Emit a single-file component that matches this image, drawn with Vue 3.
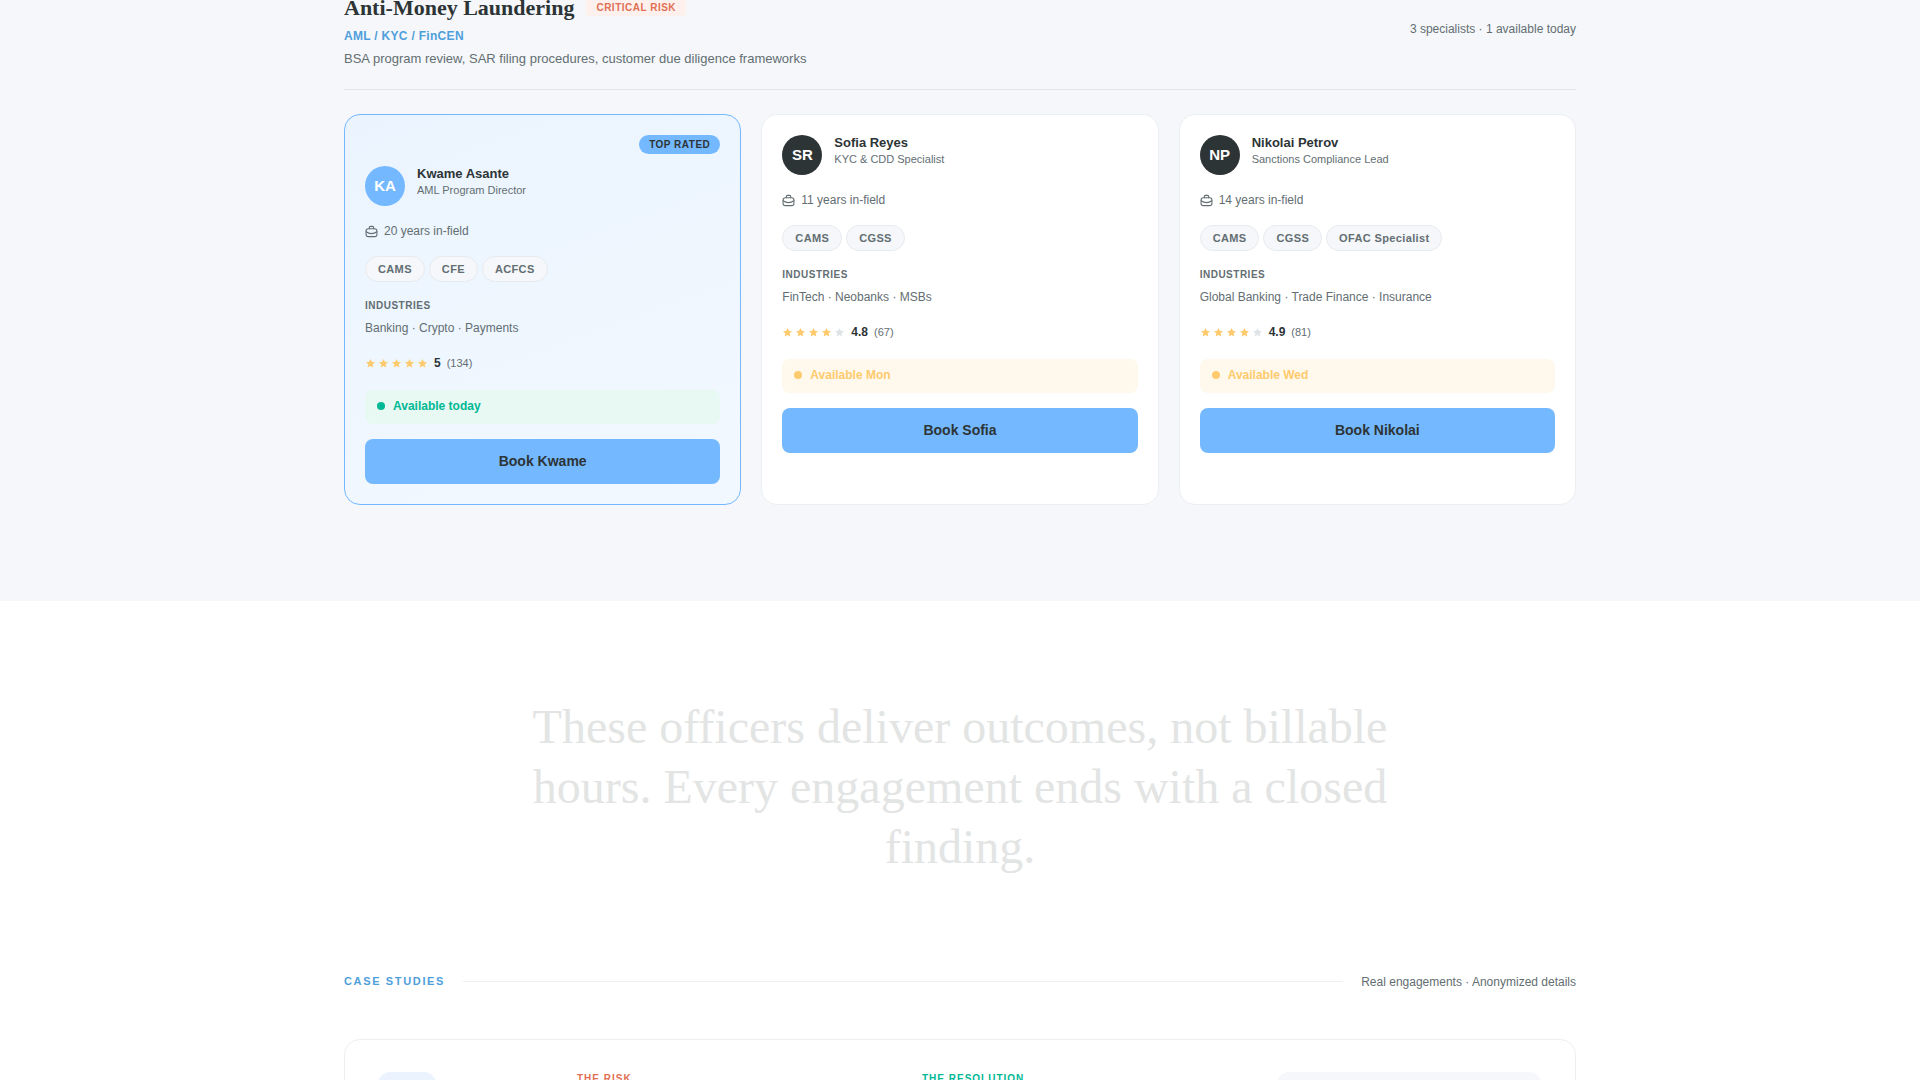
<template>
  <div class="page">
    <section class="upper">
      <div class="wrap">
        <header class="area-head">
          <div>
            <div class="title-row">
              <h2>Anti-Money Laundering</h2>
              <span class="risk">CRITICAL RISK</span>
            </div>
            <div class="codes">AML / KYC / FinCEN</div>
            <p class="desc">BSA program review, SAR filing procedures, customer due diligence frameworks</p>
          </div>
          <div class="count">3 specialists · 1 available today</div>
        </header>

        <div class="cards">
          <article v-for="o in officers" :key="o.name" class="card" :class="{ top: o.top }">
            <div v-if="o.top" class="top-row"><span class="top-badge">TOP RATED</span></div>
            <div class="person">
              <div class="avatar">{{ o.initials }}</div>
              <div>
                <div class="name">{{ o.name }}</div>
                <div class="role">{{ o.role }}</div>
              </div>
            </div>
            <div class="years">
              <svg width="13" height="13" viewBox="0 0 24 24" fill="none" stroke="currentColor" stroke-width="2" stroke-linecap="round" stroke-linejoin="round">
                <path d="M16 7V4.5a2 2 0 0 0-2-2h-4a2 2 0 0 0-2 2V7" />
                <rect x="2" y="7" width="20" height="14.5" rx="4" />
                <path d="M22 12.5a18 18 0 0 1-20 0" />
              </svg>
              {{ o.years }} years in-field
            </div>
            <div class="tags">
              <span v-for="t in o.certs" :key="t" class="tag">{{ t }}</span>
            </div>
            <div class="ind-label">INDUSTRIES</div>
            <div class="ind">{{ o.industries }}</div>
            <div class="rating">
              <span class="stars">
                <svg v-for="n in 5" :key="n" width="13" height="13" viewBox="0 0 24 24" :class="n <= o.filled ? 'on' : 'off'">
                  <path d="M12 3.5l2.5 5.4 5.9.7-4.4 4 1.2 5.8-5.2-3-5.2 3 1.2-5.8-4.4-4 5.9-.7z" />
                </svg>
              </span>
              <b>{{ o.score }}</b>
              <span class="reviews">({{ o.reviews }})</span>
            </div>
            <div class="avail" :class="o.today ? 'today' : 'later'">
              <i></i>{{ o.avail }}
            </div>
            <button class="book">Book {{ o.first }}</button>
          </article>
        </div>
      </div>
    </section>

    <section class="lower">
      <blockquote>These officers deliver outcomes, not billable hours. Every engagement ends with a closed finding.</blockquote>
      <div class="wrap">
        <div class="case-head">
          <span class="case-label">CASE STUDIES</span>
          <span class="case-line"></span>
          <span class="case-note">Real engagements · Anonymized details</span>
        </div>
        <div class="case-card">
          <div class="case-pill"></div>
          <div class="col risk-col">THE RISK</div>
          <div class="col res-col">THE RESOLUTION</div>
          <div class="case-panel"></div>
        </div>
      </div>
    </section>
  </div>
</template>

<script setup>
const officers = [
  { name: 'Kwame Asante', first: 'Kwame', initials: 'KA', role: 'AML Program Director', years: 20, certs: ['CAMS', 'CFE', 'ACFCS'], industries: 'Banking · Crypto · Payments', filled: 5, score: '5', reviews: 134, today: true, avail: 'Available today', top: true },
  { name: 'Sofia Reyes', first: 'Sofia', initials: 'SR', role: 'KYC & CDD Specialist', years: 11, certs: ['CAMS', 'CGSS'], industries: 'FinTech · Neobanks · MSBs', filled: 4, score: '4.8', reviews: 67, today: false, avail: 'Available Mon' },
  { name: 'Nikolai Petrov', first: 'Nikolai', initials: 'NP', role: 'Sanctions Compliance Lead', years: 14, certs: ['CAMS', 'CGSS', 'OFAC Specialist'], industries: 'Global Banking · Trade Finance · Insurance', filled: 4, score: '4.9', reviews: 81, today: false, avail: 'Available Wed' }
]
</script>

<style>
html, body { margin: 0; overflow: hidden; }
</style>

<style scoped>
.page { height: 1080px; overflow: hidden; font-family: "Liberation Sans", Arial, sans-serif; color: #2d3436; background: #fff; }
.wrap { width: 1232px; margin: 0 auto; }
.upper { height: 601px; background: #f5f7fa; overflow: hidden; }
.area-head { display: flex; justify-content: space-between; align-items: center; margin-top: -6px; padding-bottom: 20px; border-bottom: 1px solid #e2e5e9; }
.title-row { display: flex; align-items: center; gap: 12px; height: 27px; }
h2 { margin: 0; font: 700 22px/27px "Liberation Serif", "Times New Roman", serif; color: #2d3436; }
.risk { font-size: 10px; font-weight: 700; letter-spacing: 0.5px; color: #e17055; background: #fdf0ed; padding: 3px 10px; border-radius: 4px; }
.codes { margin-top: 8px; font-size: 12px; font-weight: 700; letter-spacing: 0.3px; color: #4f9fdc; line-height: 14px; }
.desc { margin: 6px 0 0; font-size: 13px; line-height: 20px; color: #636e72; }
.count { font-size: 12px; color: #636e72; margin-bottom: 5px; }

.cards { display: grid; grid-template-columns: repeat(3, 1fr); gap: 20px; margin-top: 24px; }
.card { background: #fff; border: 1px solid #eceff2; border-radius: 16px; padding: 20px; height: 391px; box-sizing: border-box; }
.card.top { background: linear-gradient(160deg, #ebf4fe, #f2f8ff); border-color: #74b9ff; }
.top-row { display: flex; justify-content: flex-end; margin-bottom: 12px; }
.top-badge { font-size: 10px; font-weight: 700; letter-spacing: 0.5px; line-height: 13px; background: #74b9ff; color: #2d3436; padding: 3px 10px; border-radius: 10px; }
.person { display: flex; align-items: center; gap: 12px; }
.avatar { width: 40px; height: 40px; border-radius: 50%; background: #2d3436; color: #fff; font-size: 15px; font-weight: 700; display: flex; align-items: center; justify-content: center; padding-bottom: 2px; box-sizing: border-box; }
.top .avatar { background: #74b9ff; }
.name { font-size: 13px; font-weight: 700; line-height: 16px; margin-top: -8px; }
.role { font-size: 11px; color: #636e72; line-height: 16px; }
.years { display: flex; align-items: center; gap: 6px; font-size: 12px; color: #636e72; margin-top: 16px; height: 18px; }
.years svg { color: #636e72; }
.tags { display: flex; gap: 4px; margin-top: 16px; }
.tag { font-size: 11px; font-weight: 700; letter-spacing: 0.36px; color: #636e72; background: #f5f7fa; border: 1px solid #e8ebee; border-radius: 13px; padding: 0 12px; line-height: 24px; }
.ind-label { margin-top: 18px; font-size: 10px; font-weight: 700; letter-spacing: 0.5px; color: #636e72; line-height: 12px; }
.ind { margin-top: 9px; font-size: 12px; color: #636e72; line-height: 14px; }
.rating { display: flex; align-items: center; margin-top: 20px; height: 16px; }
.stars { display: flex; margin: 0 5px 0 -1px; }
.stars svg { display: block; }
.stars .on { fill: #fdcb6e; }
.stars .off { fill: #dfe3e6; }
.rating b { font-size: 12px; margin-right: 6px; }
.reviews { font-size: 11px; color: #636e72; }
.avail { display: flex; align-items: center; gap: 8px; height: 34px; margin-top: 19px; padding: 0 12px 2px; border-radius: 8px; font-size: 12px; font-weight: 700; box-sizing: border-box; }
.avail i { width: 8px; height: 8px; border-radius: 50%; background: currentColor; }
.today { background: #e8f8f3; color: #00b894; }
.later { background: #fff8ec; color: #fdcb6e; }
.book { display: block; width: 100%; height: 45px; margin-top: 15px; padding: 0 0 2px; border: 0; border-radius: 8px; background: #74b9ff; color: #2d3436; font: 700 14px "Liberation Sans", Arial, sans-serif; }

.lower { padding-top: 96px; }
blockquote { width: 900px; margin: 0 auto; text-align: center; font: 400 48px/60px "Liberation Serif", "Times New Roman", serif; color: #e3e4e4; }
.case-head { display: flex; align-items: center; gap: 18px; margin-top: 96px; }
.case-label { font-size: 11px; font-weight: 700; letter-spacing: 1.65px; color: #4f9fdc; }
.case-line { flex: 1; height: 1px; background: #eceff2; }
.case-note { font-size: 12px; color: #636e72; margin-top: 2px; }
.case-card { display: flex; margin-top: 50px; height: 200px; padding: 32px 33px; box-sizing: border-box; border: 1px solid #eceff2; border-radius: 16px; }
.case-pill { width: 58px; height: 40px; border-radius: 12px; background: #ebf4fe; }
.col { font-size: 10px; font-weight: 700; letter-spacing: 1px; line-height: 12px; margin-top: 1px; }
.risk-col { margin-left: 141px; width: 345px; color: #e17055; }
.res-col { width: 355px; color: #00b894; }
.case-panel { width: 264px; height: 100px; border-radius: 12px; background: #f5f7fa; }
</style>
